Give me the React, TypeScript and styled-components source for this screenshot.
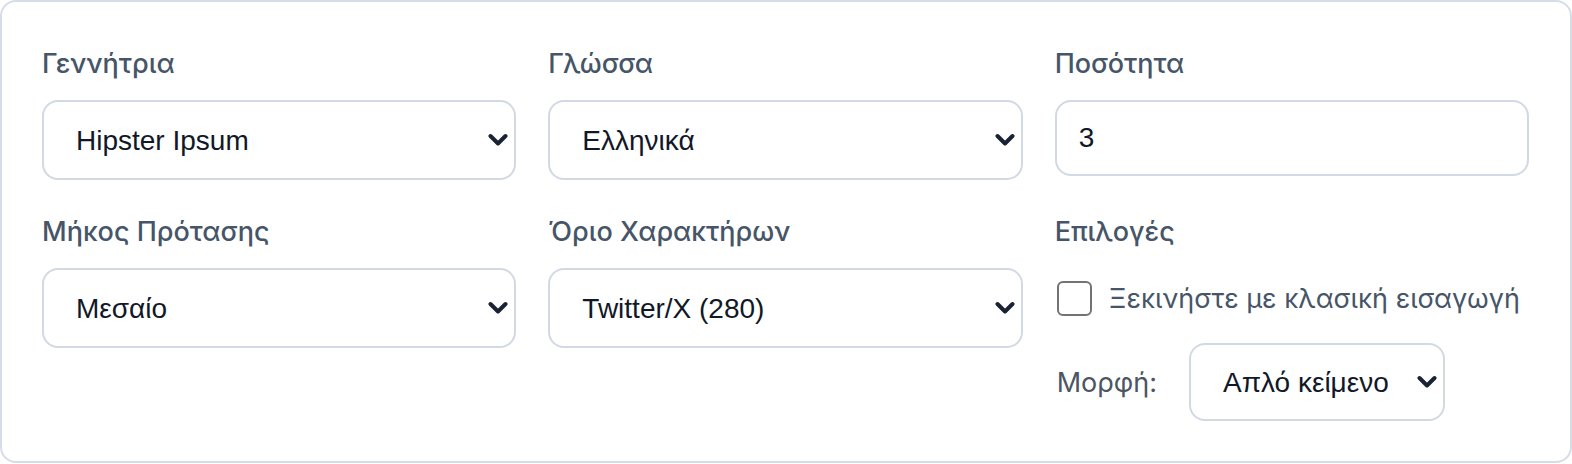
import React, { useState } from 'react';
import styled, { createGlobalStyle } from 'styled-components';

const GlobalStyle = createGlobalStyle`
  * { box-sizing: border-box; }
  body {
    margin: 0;
    background: #ffffff;
    font-family: Inter, "Noto Sans", sans-serif;
  }
`;

const Card = styled.div`
  width: 1572px;
  border: 2px solid #d5dde7;
  border-radius: 16px;
  background: #fff;
  padding: 42px 41px 40px 40px;
`;

const Grid = styled.div`
  display: grid;
  grid-template-columns: repeat(3, 1fr);
  column-gap: 32px;
  row-gap: 32px;
`;

const Field = styled.div`
  display: flex;
  flex-direction: column;
`;

const Label = styled.label`
  display: block;
  font-family: Inter, "Noto Sans", sans-serif;
  font-size: 27px;
  font-weight: 500;
  line-height: 40px;
  color: #465568;
  margin-bottom: 16px;
`;

const SelectWrap = styled.div<{ $width?: number }>`
  position: relative;
  width: ${({ $width }) => ($width ? `${$width}px` : '100%')};
`;

const Select = styled.select<{ $height?: number }>`
  appearance: none;
  -webkit-appearance: none;
  width: 100%;
  height: ${({ $height }) => $height ?? 80}px;
  border: 2px solid #d2d9e3;
  border-radius: 16px;
  background: #fff;
  padding: 0 48px 0 32px;
  font-family: "Liberation Sans", Arial, sans-serif;
  font-size: 28px;
  color: #111827;
  outline: none;
`;

const Chevron = styled.svg`
  position: absolute;
  right: 8px;
  top: 50%;
  width: 20px;
  height: 13px;
  transform: translateY(-50%);
  pointer-events: none;
`;

const Input = styled.input`
  width: 100%;
  height: 76px;
  border: 2px solid #d2d9e3;
  border-radius: 16px;
  padding: 0 22px;
  font-family: "Liberation Sans", Arial, sans-serif;
  font-size: 28px;
  color: #111827;
  outline: none;
`;

const CheckRow = styled.label`
  display: flex;
  align-items: center;
  gap: 17px;
  height: 44px;
  margin-top: 8px;
  padding-left: 2px;
  font-family: Inter, "Noto Sans", sans-serif;
  font-size: 27px;
  color: #465568;
`;

const Box = styled.input`
  appearance: none;
  -webkit-appearance: none;
  width: 35px;
  height: 35px;
  margin: 0;
  border: 2px solid #737373;
  border-radius: 6px;
  background: #fff;
`;

const FormatRow = styled.div`
  display: flex;
  align-items: center;
  gap: 32px;
  margin-top: 23px;
  padding-left: 2px;
`;

const FormatLabel = styled.span`
  font-family: Inter, "Noto Sans", sans-serif;
  font-size: 27px;
  color: #4b5563;
`;

type Option = { value: string; label: string };

const ChevronIcon = () => (
  <Chevron viewBox="0 0 20 13">
    <path d="M2.5 2.5 L10 10 L17.5 2.5" fill="none" stroke="#1a2333" strokeWidth="4" strokeLinecap="round" strokeLinejoin="round" />
  </Chevron>
);

const Dropdown: React.FC<{ options: Option[]; value: string; width?: number; height?: number; onChange: (v: string) => void }> = ({
  options,
  value,
  width,
  height,
  onChange,
}) => (
  <SelectWrap $width={width}>
    <Select $height={height} value={value} onChange={(e) => onChange(e.target.value)}>
      {options.map((o) => (
        <option key={o.value} value={o.value}>
          {o.label}
        </option>
      ))}
    </Select>
    <ChevronIcon />
  </SelectWrap>
);

export default function App() {
  const [generator, setGenerator] = useState('hipster');
  const [language, setLanguage] = useState('el');
  const [count, setCount] = useState('3');
  const [length, setLength] = useState('medium');
  const [limit, setLimit] = useState('280');
  const [classic, setClassic] = useState(false);
  const [format, setFormat] = useState('plain');

  return (
    <>
      <GlobalStyle />
      <Card>
        <Grid>
          <Field>
            <Label>Γεννήτρια</Label>
            <Dropdown
              value={generator}
              onChange={setGenerator}
              options={[
                { value: 'hipster', label: 'Hipster Ipsum' },
                { value: 'lorem', label: 'Lorem Ipsum' },
              ]}
            />
          </Field>
          <Field>
            <Label>Γλώσσα</Label>
            <Dropdown
              value={language}
              onChange={setLanguage}
              options={[
                { value: 'el', label: 'Ελληνικά' },
                { value: 'en', label: 'English' },
              ]}
            />
          </Field>
          <Field>
            <Label>Ποσότητα</Label>
            <Input type="text" value={count} onChange={(e) => setCount(e.target.value)} />
          </Field>
          <Field>
            <Label>Μήκος Πρότασης</Label>
            <Dropdown
              value={length}
              onChange={setLength}
              options={[
                { value: 'short', label: 'Σύντομο' },
                { value: 'medium', label: 'Μεσαίο' },
                { value: 'long', label: 'Μακρύ' },
              ]}
            />
          </Field>
          <Field>
            <Label>Όριο Χαρακτήρων</Label>
            <Dropdown
              value={limit}
              onChange={setLimit}
              options={[
                { value: 'none', label: 'Χωρίς όριο' },
                { value: '280', label: 'Twitter/X (280)' },
              ]}
            />
          </Field>
          <Field>
            <Label>Επιλογές</Label>
            <CheckRow>
              <Box type="checkbox" checked={classic} onChange={(e) => setClassic(e.target.checked)} />
              Ξεκινήστε με κλασική εισαγωγή
            </CheckRow>
            <FormatRow>
              <FormatLabel>Μορφή:</FormatLabel>
              <Dropdown
                width={256}
                height={78}
                value={format}
                onChange={setFormat}
                options={[
                  { value: 'plain', label: 'Απλό κείμενο' },
                  { value: 'html', label: 'HTML' },
                ]}
              />
            </FormatRow>
          </Field>
        </Grid>
      </Card>
    </>
  );
}
